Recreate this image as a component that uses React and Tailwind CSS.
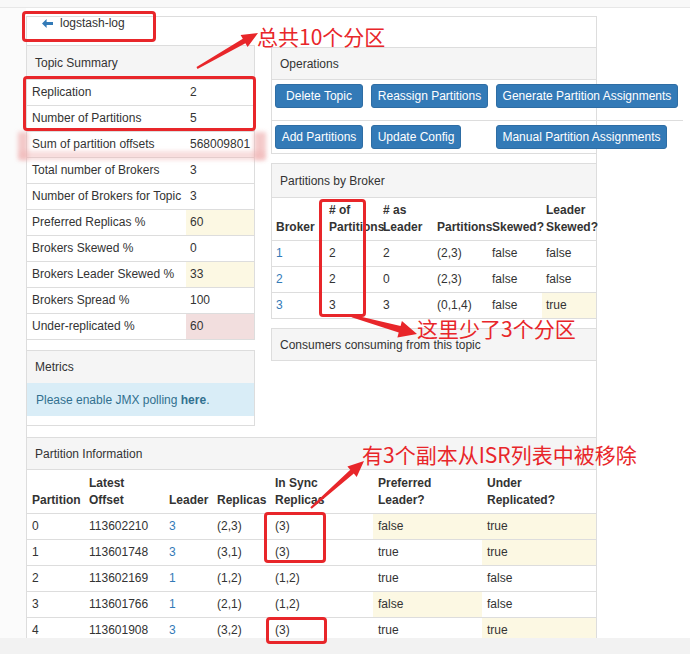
import React from "react";

const RED = "#e8262a";

function arrowPoints(tx, ty, hx, hy, L, W, w0, w1) {
  const dx = hx - tx;
  const dy = hy - ty;
  const len = Math.hypot(dx, dy);
  const ux = dx / len;
  const uy = dy / len;
  const nx = -uy;
  const ny = ux;
  const bx = hx - ux * L;
  const by = hy - uy * L;
  const p = [
    [tx + nx * w0, ty + ny * w0],
    [bx + nx * w1, by + ny * w1],
    [bx + nx * W, by + ny * W],
    [hx, hy],
    [bx - nx * W, by - ny * W],
    [bx - nx * w1, by - ny * w1],
    [tx - nx * w0, ty - ny * w0],
  ];
  return p.map(([x, y]) => `${x.toFixed(1)},${y.toFixed(1)}`).join(" ");
}

const summary = [
  ["Replication", "2", ""],
  ["Number of Partitions", "5", ""],
  ["Sum of partition offsets", "568009801", ""],
  ["Total number of Brokers", "3", ""],
  ["Number of Brokers for Topic", "3", ""],
  ["Preferred Replicas %", "60", "bg-[#fcf8e3]"],
  ["Brokers Skewed %", "0", ""],
  ["Brokers Leader Skewed %", "33", "bg-[#fcf8e3]"],
  ["Brokers Spread %", "100", ""],
  ["Under-replicated %", "60", "bg-[#f2dede]"],
];

const btnRow1 = [
  { t: "Delete Topic", w: "w-[88px]", cell: "w-[96px]" },
  { t: "Reassign Partitions", w: "w-[117px]", cell: "w-[125px]" },
  { t: "Generate Partition Assignments", w: "w-[182px]", cell: "w-[182px]" },
];
const btnRow2 = [
  { t: "Add Partitions", w: "w-[88px]", cell: "w-[96px]" },
  { t: "Update Config", w: "w-[90px]", cell: "w-[125px]" },
  { t: "Manual Partition Assignments", w: "w-[171px]", cell: "w-[171px]" },
];

const brokers = [
  ["1", "2", "2", "(2,3)", "false", "false", false],
  ["2", "2", "0", "(2,3)", "false", "false", false],
  ["3", "3", "3", "(0,1,4)", "false", "true", true],
];

const partitions = [
  ["0", "113602210", "3", "(2,3)", "(3)", "false", "true", true, true],
  ["1", "113601748", "3", "(3,1)", "(3)", "true", "true", false, true],
  ["2", "113602169", "1", "(1,2)", "(1,2)", "true", "false", false, false],
  ["3", "113601766", "1", "(2,1)", "(1,2)", "false", "false", true, false],
  ["4", "113601908", "3", "(3,2)", "(3)", "true", "true", false, true],
];

function Btn({ t, w }) {
  return (
    <div
      className={`${w} h-[24px] shrink-0 flex items-center justify-center rounded-[3px] bg-[#337ab7] border border-[#2e6da4] text-white whitespace-nowrap`}
    >
      {t}
    </div>
  );
}

export default function App() {
  return (
    <div className="relative w-[690px] h-[654px] overflow-hidden bg-white text-[12px] leading-normal text-[#333] font-['Liberation_Sans',Arial,'Noto_Sans_CJK_SC',sans-serif]">
      {/* top strip */}
      <div className="h-[8px] bg-[#f8f8f8] border-b border-[#e7e7e7]" />

      <div className="flex h-[630px]">
        <div className="w-[26px] shrink-0 bg-[#fbfbfb]" />
        {/* outer box */}
        <div className="mt-[8px] h-[622px] w-[571px] shrink-0 border-l border-r border-t border-[#ddd]">
          {/* heading */}
          <div className="h-[28px] flex items-start pl-[15px]">
            <svg width="11" height="9" viewBox="0 0 11 9" className="mt-[2px]">
              <path d="M0 4.5 L4.6 0 L4.6 2.9 L11 2.9 L11 6.1 L4.6 6.1 L4.6 9 Z" fill="#337ab7" />
            </svg>
            <span className="ml-[7px] leading-[13px]">logstash-log</span>
          </div>

          <div className="flex items-start">
            {/* left column */}
            <div className="w-[228px] shrink-0">
              <div className="border-r border-[#ddd]">
                <div className="h-[34px] border-t border-[#ddd] bg-[#f5f5f5] pl-[8px] flex items-center">
                  Topic Summary
                </div>
                {summary.map(([k, v, bg]) => (
                  <div key={k} className="grid grid-cols-[159px_68px] h-[26px] border-t border-[#ddd]">
                    <div className="pl-[5px] pb-[1px] flex items-center whitespace-nowrap">{k}</div>
                    <div className={`pl-[4px] pb-[1px] flex items-center ${bg}`}>{v}</div>
                  </div>
                ))}
                <div className="border-t border-[#ddd]" />
              </div>

              <div className="mt-[10px] border-r border-t border-b border-[#ddd]">
                <div className="h-[32px] bg-[#f5f5f5] pl-[8px] flex items-center">Metrics</div>
                <div className="h-[33px] bg-[#d9edf7] text-[#31708f] pl-[9px] flex items-center">
                  <span>
                    Please enable JMX polling <b>here</b>.
                  </span>
                </div>
                <div className="h-[9px]" />
              </div>
            </div>

            {/* right column */}
            <div className="ml-[16px] w-[325px] shrink-0">
              {/* Operations */}
              <div className="mt-[2px] border-l border-b border-[#ddd]">
                <div className="h-[33px] border-t border-b border-[#ddd] bg-[#f5f5f5] pl-[8px] flex items-center">
                  Operations
                </div>
                <div className="h-[40px] pt-[4px] pl-[3px] flex items-start">
                  {btnRow1.map((b) => (
                    <div key={b.t} className={`${b.cell} shrink-0`}>
                      <Btn t={b.t} w={b.w} />
                    </div>
                  ))}
                </div>
                <div className="h-[33px] w-[411px] border-t border-[#ddd] pt-[4px] pl-[3px] flex items-start">
                  {btnRow2.map((b) => (
                    <div key={b.t} className={`${b.cell} shrink-0`}>
                      <Btn t={b.t} w={b.w} />
                    </div>
                  ))}
                </div>
              </div>

              {/* Partitions by Broker */}
              <div className="mt-[9px] border-l border-b border-[#ddd]">
                <div className="h-[34px] border-t border-[#ddd] bg-[#f5f5f5] pl-[8px] flex items-center">
                  Partitions by Broker
                </div>
                <div className="h-[43px] border-t border-[#ddd] grid grid-cols-[53px_54px_54px_55px_54px_54px] items-end pb-[4px] font-bold leading-[17px] whitespace-nowrap">
                  <div className="px-[4px]">Broker</div>
                  <div className="px-[4px]">
                    # of
                    <br />
                    Partitions
                  </div>
                  <div className="px-[4px]">
                    # as
                    <br />
                    Leader
                  </div>
                  <div className="px-[4px]">Partitions</div>
                  <div className="px-[4px]">Skewed?</div>
                  <div className="px-[4px]">
                    Leader
                    <br />
                    Skewed?
                  </div>
                </div>
                {brokers.map((r) => (
                  <div key={r[0]} className="h-[26px] border-t border-[#ddd] grid grid-cols-[53px_54px_54px_55px_54px_54px] whitespace-nowrap">
                    <div className="px-[4px] pb-[1px] flex items-center text-[#337ab7]">{r[0]}</div>
                    <div className="px-[4px] pb-[1px] flex items-center">{r[1]}</div>
                    <div className="px-[4px] pb-[1px] flex items-center">{r[2]}</div>
                    <div className="px-[4px] pb-[1px] flex items-center">{r[3]}</div>
                    <div className="px-[4px] pb-[1px] flex items-center">{r[4]}</div>
                    <div className={`pl-[4px] pb-[1px] flex items-center ${r[6] ? "bg-[#fcf8e3]" : ""}`}>{r[5]}</div>
                  </div>
                ))}
              </div>

              {/* Consumers */}
              <div className="mt-[9px] border-l border-[#ddd]">
                <div className="h-[33px] border-t border-b border-[#ddd] bg-[#f5f5f5] pl-[8px] flex items-center">
                  Consumers consuming from this topic
                </div>
              </div>
            </div>
          </div>

          {/* Partition Information */}
          <div className="mt-[11px] h-[201px] overflow-hidden">
            <div className="h-[32px] border-t border-[#ddd] bg-[#f5f5f5] pl-[8px] flex items-center">
              Partition Information
            </div>
            <div className="h-[44px] border-t border-[#ddd] grid grid-cols-[57px_80px_48px_58px_103px_109px_114px] items-end pb-[4px] font-bold leading-[17px] whitespace-nowrap">
              <div className="px-[5px]">Partition</div>
              <div className="px-[5px]">
                Latest
                <br />
                Offset
              </div>
              <div className="px-[5px]">Leader</div>
              <div className="px-[5px]">Replicas</div>
              <div className="px-[5px]">
                In Sync
                <br />
                Replicas
              </div>
              <div className="px-[5px]">
                Preferred
                <br />
                Leader?
              </div>
              <div className="px-[5px]">
                Under
                <br />
                Replicated?
              </div>
            </div>
            {partitions.map((r) => (
              <div key={r[0]} className="h-[26px] border-t border-[#ddd] grid grid-cols-[57px_80px_48px_58px_103px_109px_114px] whitespace-nowrap">
                <div className="px-[5px] pb-[1px] flex items-center">{r[0]}</div>
                <div className="px-[5px] pb-[1px] flex items-center">{r[1]}</div>
                <div className="px-[5px] pb-[1px] flex items-center text-[#337ab7]">{r[2]}</div>
                <div className="px-[5px] pb-[1px] flex items-center">{r[3]}</div>
                <div className="px-[5px] pb-[1px] flex items-center">{r[4]}</div>
                <div className={`px-[5px] pb-[1px] flex items-center ${r[7] ? "bg-[#fcf8e3]" : ""}`}>{r[5]}</div>
                <div className={`px-[5px] pb-[1px] flex items-center ${r[8] ? "bg-[#fcf8e3]" : ""}`}>{r[6]}</div>
              </div>
            ))}
          </div>
        </div>
      </div>

      {/* bottom strip */}
      <div className="h-[16px] bg-[#f2f2f2]" />

      {/* ---------- annotations ---------- */}
      {/* pink smear around "Sum of partition offsets" */}
      <div className="pointer-events-none absolute left-[18px] top-[132px] w-[10px] h-[28px] bg-[#efb3b3] opacity-70 blur-[2px]" />
      <div className="pointer-events-none absolute left-[254px] top-[132px] w-[12px] h-[28px] bg-[#efb3b3] opacity-70 blur-[2px]" />
      <div className="pointer-events-none absolute left-[20px] top-[151px] w-[244px] h-[9px] bg-[#efb3b3] opacity-45 blur-[2px]" />

      <div className="pointer-events-none absolute left-[22px] top-[11px] w-[134px] h-[31px] border-[3px] border-[#e8262a] rounded-[4px]" />
      <div className="pointer-events-none absolute left-[23px] top-[76px] w-[233px] h-[55px] border-[3px] border-[#e8262a] rounded-[4px]" />
      <div className="pointer-events-none absolute left-[319px] top-[199px] w-[47px] h-[118px] border-[3px] border-[#e8262a] rounded-[4px]" />
      <div className="pointer-events-none absolute left-[264px] top-[512px] w-[62px] h-[51px] border-[3px] border-[#e8262a] rounded-[4px]" />
      <div className="pointer-events-none absolute left-[266px] top-[617px] w-[61px] h-[27px] border-[3px] border-[#e8262a] rounded-[4px]" />

      <svg className="pointer-events-none absolute left-0 top-0" width="690" height="654">
        <polygon points={arrowPoints(197, 68, 258, 33, 16, 7, 1, 2.6)} fill={RED} />
        <polygon points={arrowPoints(352, 316, 417, 334, 18, 8.5, 1.4, 3.4)} fill={RED} />
        <polygon points={arrowPoints(311, 508, 364, 461, 16, 7, 1, 2.6)} fill={RED} />
      </svg>

      <div className="pointer-events-none absolute left-[257px] top-[26px] text-[21px] leading-none text-[#e8262a] whitespace-nowrap font-['Noto_Sans_CJK_SC',sans-serif]">
        总共10个分区
      </div>
      <div className="pointer-events-none absolute left-[417px] top-[318px] text-[21px] leading-none text-[#e8262a] whitespace-nowrap font-['Noto_Sans_CJK_SC',sans-serif]">
        这里少了3个分区
      </div>
      <div className="pointer-events-none absolute left-[362px] top-[444px] text-[21px] leading-none text-[#e8262a] whitespace-nowrap font-['Noto_Sans_CJK_SC',sans-serif]">
        有3个副本从ISR列表中被移除
      </div>
    </div>
  );
}
